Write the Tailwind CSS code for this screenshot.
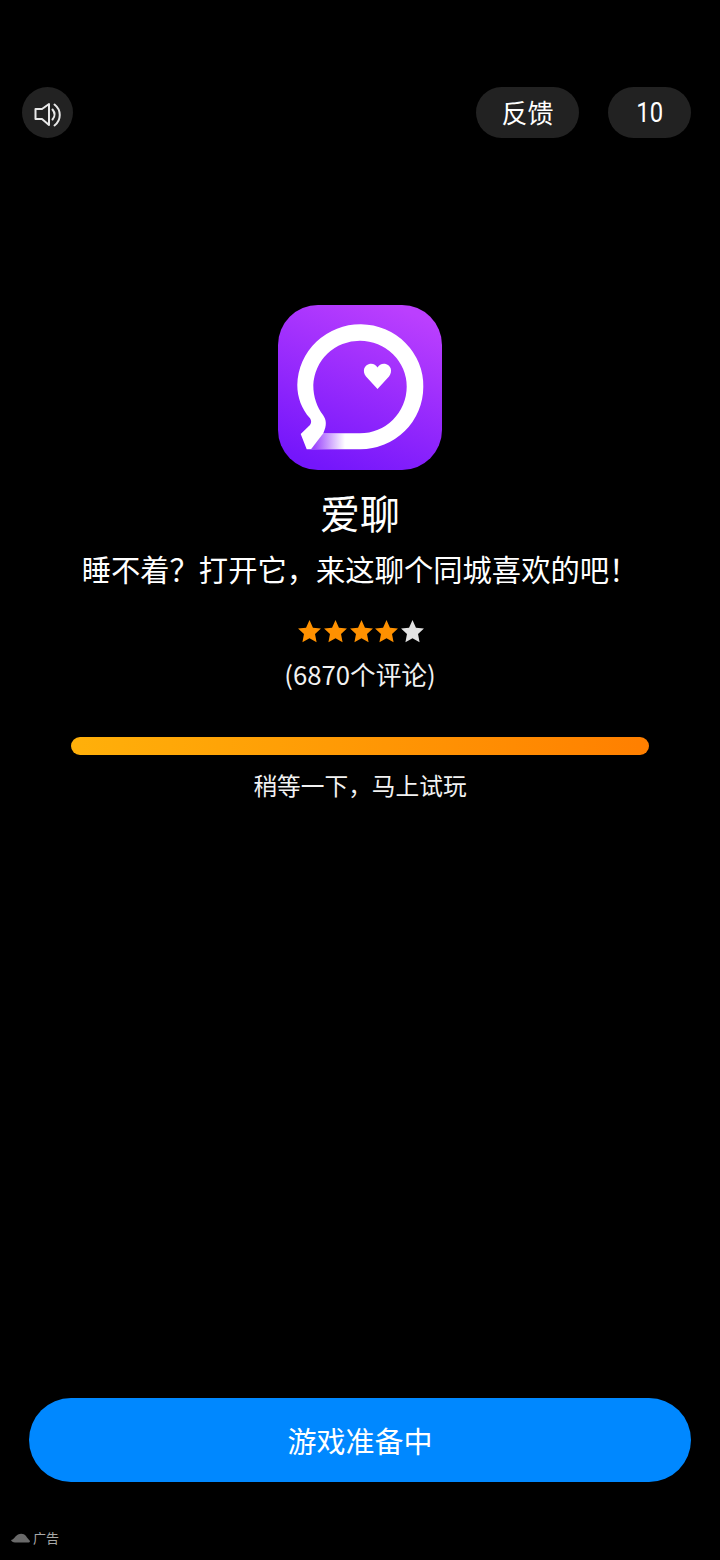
<!DOCTYPE html>
<html lang="zh-CN">
<head>
  <meta charset="UTF-8" />
  <script src="https://cdn.jsdelivr.net/npm/@tailwindcss/browser@4"></script>
  <title>爱聊</title>
</head>
<body class="bg-black text-white font-['Noto_Sans_CJK_SC','Noto_Sans',sans-serif]">
  <div class="flex h-[1560px] w-[720px] flex-col items-center overflow-hidden bg-black">
    <!-- top bar -->
    <div class="mt-[87px] flex w-full items-center pl-[22px] pr-[29px]">
      <button class="flex h-[51px] w-[51px] items-center justify-center rounded-full bg-[#222222]">
        <svg class="mt-[2px] h-[28px] w-[28px]" viewBox="0 0 28 28" fill="none" stroke="#e8e8e8" stroke-width="2" stroke-linejoin="round" stroke-linecap="round">
          <path d="M1.500 9H8L15 4V25L8 19H1.500Z" />
          <path d="M18.500 9.500C21 12.500 21 16.500 18.500 19.500" />
          <path d="M20.500 4.500C27.500 10 27.500 20 20.500 25.500" />
        </svg>
      </button>
      <button class="ml-auto flex h-[51px] w-[103px] items-center justify-center rounded-full bg-[#222222] pb-[2px] text-[26px]">反馈</button>
      <button class="ml-[29px] flex h-[51px] w-[83px] items-center justify-center rounded-full bg-[#222222] pt-[1px] font-['Roboto',sans-serif] text-[28px]"><span class="inline-block scale-x-[0.85]">10</span></button>
    </div>

    <!-- app icon -->
    <svg class="mt-[167px] h-[165px] w-[164px]" viewBox="0 0 164 165">
      <defs>
        <linearGradient id="appBg" x1="0.7" y1="0" x2="0.3" y2="1">
          <stop offset="0" stop-color="#bb3ffe" />
          <stop offset="1" stop-color="#7416fb" />
        </linearGradient>
        <linearGradient id="tailFade" gradientUnits="userSpaceOnUse" x1="36" y1="0" x2="67" y2="0">
          <stop offset="0" stop-color="#8a25fc" stop-opacity="0.85" />
          <stop offset="1" stop-color="#8a25fc" stop-opacity="0" />
        </linearGradient>
      </defs>
      <rect width="164" height="165" rx="40" fill="url(#appBg)" />
      <path fill-rule="evenodd" fill="#ffffff" d="M22.700 129L32 120C33.500 118 33.500 115.500 32 113.300C23.500 104 19.300 92 19.300 80A63 61.500 0 0 1 145.300 81.700A63 62.500 0 0 1 82 144.300H28.700ZM45.300 128.300H82A46.700 46.700 0 0 0 128.700 81.700A46.700 46 0 0 0 82 35.700A46.700 46 0 0 0 35.300 80C35.300 92 39 102 45 110C48.500 115 49 120 45.300 128.300Z" />
      <path fill="url(#tailFade)" d="M33 144.300L45.300 128.300H67V144.300Z" />
      <path d="M99.500 84L88 71.500C84 66.500 86 59.800 92 58.800C95 58.300 98 59.800 99.500 62.500C101 59.800 104 58.300 107 58.800C113 59.800 115 66.500 111 71.500Z" fill="#ffffff" />
    </svg>

    <div class="mt-[13px] text-[40px] leading-[58px]">爱聊</div>
    <div class="mt-[5px] whitespace-nowrap text-[29.300px] leading-[44px]">睡不着&#xFF1F;打开它&#xFF0C;来这聊个同城喜欢的吧&#xFF01;</div>

    <!-- rating -->
    <div class="ml-[2px] mt-[29px] flex h-[26px] w-[128px] justify-between">
      <svg class="h-[25px] w-[25px]" viewBox="0 0 24 24" fill="#ff9100"><path d="M12 1l3.300 7.300 7.700.9-5.700 5.300 1.500 7.900L12 18.500l-6.800 3.900 1.500-7.900L1 9.200l7.700-.9z" /></svg>
      <svg class="h-[25px] w-[25px]" viewBox="0 0 24 24" fill="#ff9100"><path d="M12 1l3.300 7.300 7.700.9-5.700 5.300 1.500 7.900L12 18.500l-6.800 3.900 1.500-7.900L1 9.200l7.700-.9z" /></svg>
      <svg class="h-[25px] w-[25px]" viewBox="0 0 24 24" fill="#ff9100"><path d="M12 1l3.300 7.300 7.700.9-5.700 5.300 1.500 7.900L12 18.500l-6.800 3.900 1.500-7.900L1 9.200l7.700-.9z" /></svg>
      <svg class="h-[25px] w-[25px]" viewBox="0 0 24 24" fill="#ff9100"><path d="M12 1l3.300 7.300 7.700.9-5.700 5.300 1.500 7.900L12 18.500l-6.800 3.900 1.500-7.900L1 9.200l7.700-.9z" /></svg>
      <svg class="h-[25px] w-[25px]" viewBox="0 0 24 24" fill="#e2e2e2"><path d="M12 1l3.300 7.300 7.700.9-5.700 5.300 1.500 7.900L12 18.500l-6.800 3.900 1.500-7.900L1 9.200l7.700-.9z" /></svg>
    </div>
    <div class="mt-[10px] text-[25.700px] leading-[38px] text-[#f2f2f2]">(6870个评论)</div>

    <!-- progress -->
    <div class="mt-[44px] h-[18px] w-[578px] rounded-full bg-gradient-to-r from-[#ffb00a] to-[#ff7f00]"></div>
    <div class="mt-[13px] text-[23.700px] leading-[35px] text-[#f2f2f2]">稍等一下&#xFF0C;马上试玩</div>

    <!-- cta -->
    <button class="mt-auto flex h-[84px] w-[662px] items-center justify-center rounded-full bg-[#0088ff] pt-[1px] text-[29px]">游戏准备中</button>

    <!-- ad mark -->
    <div class="mb-[13px] mt-[46px] flex h-[19px] items-center gap-[3px] self-start pl-[11px] text-[13px] text-[#a8a8a8]">
      <svg class="h-[10px] w-[19px]" viewBox="0 0 19 10" fill="#6a6a6a"><path d="M0 7C3 6.500 4 3 7 1.500C10 0 13 .5 15 3C16 4.500 17 6 19 8C19 9.500 18 9.500 17 9.500H4C2 9.500 .5 8.500 0 7Z" /></svg>
      <span>广告</span>
    </div>
  </div>
</body>
</html>
